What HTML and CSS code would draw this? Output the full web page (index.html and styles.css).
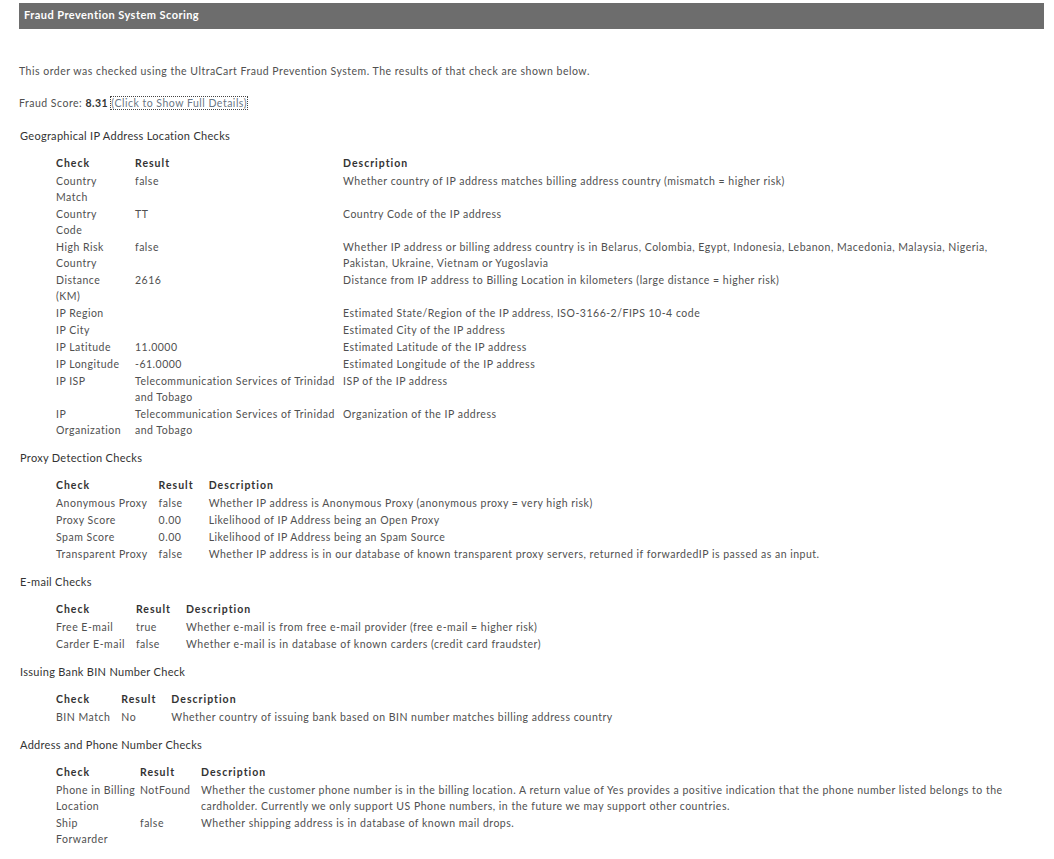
FILE: index.html
```html
<!DOCTYPE html>
<html>
<head>
<meta charset="utf-8">
<link rel="stylesheet" href="styles.css">
</head>
<body>
<div class="page">
  <div class="titlebar">Fraud Prevention System Scoring</div>
  <p class="intro">This order was checked using the UltraCart Fraud Prevention System. The results of that check are shown below.</p>
  <p class="score">Fraud Score: <b>8.31</b> <a class="details" href="#">(Click to Show Full Details)</a></p>

  <h3 class="section">Geographical IP Address Location Checks</h3>
  <table class="checks fixed geo">
    <tr><th class="w-check">Check</th><th class="w-result">Result</th><th>Description</th></tr>
    <tr><td>Country Match</td><td>false</td><td>Whether country of IP address matches billing address country (mismatch = higher risk)</td></tr>
    <tr><td>Country Code</td><td>TT</td><td>Country Code of the IP address</td></tr>
    <tr><td>High Risk Country</td><td>false</td><td>Whether IP address or billing address country is in Belarus, Colombia, Egypt, Indonesia, Lebanon, Macedonia, Malaysia, Nigeria, Pakistan, Ukraine, Vietnam or Yugoslavia</td></tr>
    <tr><td>Distance (KM)</td><td>2616</td><td>Distance from IP address to Billing Location in kilometers (large distance = higher risk)</td></tr>
    <tr><td>IP Region</td><td></td><td>Estimated State/Region of the IP address, ISO-3166-2/FIPS 10-4 code</td></tr>
    <tr><td>IP City</td><td></td><td>Estimated City of the IP address</td></tr>
    <tr><td>IP Latitude</td><td>11.0000</td><td>Estimated Latitude of the IP address</td></tr>
    <tr><td>IP Longitude</td><td>-61.0000</td><td>Estimated Longitude of the IP address</td></tr>
    <tr><td>IP ISP</td><td>Telecommunication Services of Trinidad and Tobago</td><td>ISP of the IP address</td></tr>
    <tr><td>IP Organization</td><td>Telecommunication Services of Trinidad and Tobago</td><td>Organization of the IP address</td></tr>
  </table>

  <h3 class="section">Proxy Detection Checks</h3>
  <table class="checks">
    <tr><th>Check</th><th>Result</th><th>Description</th></tr>
    <tr><td>Anonymous Proxy</td><td>false</td><td>Whether IP address is Anonymous Proxy (anonymous proxy = very high risk)</td></tr>
    <tr><td>Proxy Score</td><td>0.00</td><td>Likelihood of IP Address being an Open Proxy</td></tr>
    <tr><td>Spam Score</td><td>0.00</td><td>Likelihood of IP Address being an Spam Source</td></tr>
    <tr><td>Transparent Proxy</td><td>false</td><td>Whether IP address is in our database of known transparent proxy servers, returned if forwardedIP is passed as an input.</td></tr>
  </table>

  <h3 class="section">E-mail Checks</h3>
  <table class="checks">
    <tr><th>Check</th><th>Result</th><th>Description</th></tr>
    <tr><td>Free E-mail</td><td>true</td><td>Whether e-mail is from free e-mail provider (free e-mail = higher risk)</td></tr>
    <tr><td>Carder E-mail</td><td>false</td><td>Whether e-mail is in database of known carders (credit card fraudster)</td></tr>
  </table>

  <h3 class="section">Issuing Bank BIN Number Check</h3>
  <table class="checks">
    <tr><th>Check</th><th>Result</th><th>Description</th></tr>
    <tr><td>BIN Match</td><td>No</td><td>Whether country of issuing bank based on BIN number matches billing address country</td></tr>
  </table>

  <h3 class="section">Address and Phone Number Checks</h3>
  <table class="checks fixed addr">
    <tr><th class="w-check">Check</th><th class="w-result">Result</th><th>Description</th></tr>
    <tr><td>Phone in Billing Location</td><td>NotFound</td><td>Whether the customer phone number is in the billing location. A return value of Yes provides a positive indication that the phone number listed belongs to the cardholder. Currently we only support US Phone numbers, in the future we may support other countries.</td></tr>
    <tr><td><span class="narrow">Ship Forwarder</span></td><td>false</td><td>Whether shipping address is in database of known mail drops.</td></tr>
  </table>
</div>
</body>
</html>
```

FILE: styles.css
```css
html, body {
  margin: 0;
  padding: 0;
  background: #ffffff;
}

body {
  font-family: Lato, "Open Sans", "Liberation Sans", sans-serif;
  font-size: 10.5px;
  line-height: 16px;
  color: #505050;
  letter-spacing: 0.5px;
}

.page {
  padding: 3px 10px 0 19px;
}

.titlebar {
  background: #6d6d6d;
  color: #ffffff;
  font-weight: bold;
  font-size: 11px;
  letter-spacing: 0.45px;
  height: 26px;
  line-height: 24px;
  padding-left: 5px;
}

.intro {
  margin: 34px 0 0 0;
}

.score {
  margin: 16px 0 0 0;
}

.score b {
  color: #333333;
}

.details {
  color: #6b7785;
  text-decoration: none;
  outline: 1px dotted #444444;
  outline-offset: 0;
}

.section {
  margin: 17px 0 0 1px;
  font-size: 11px;
  font-weight: normal;
  color: #333333;
  letter-spacing: 0.3px;
  line-height: 16px;
}

.checks {
  margin: 10px 0 0 37px;
  border-collapse: separate;
  border-spacing: 0 1px;
}

.checks + .section {
  margin-top: 11px;
}

.checks th {
  text-align: left;
  font-weight: bold;
  color: #333333;
  letter-spacing: 1px;
  padding: 0 15px 1px 0;
  vertical-align: top;
}

.checks td {
  padding: 0 11px 0 0;
  vertical-align: top;
}

.checks.fixed {
  table-layout: fixed;
  width: calc(100% - 37px);
}

.geo .w-check {
  width: 64px;
}

.geo .w-result {
  width: 193px;
}

.geo td:nth-child(2) {
  padding-right: 6px;
}

.addr .w-check {
  width: 69px;
}

.addr .w-result {
  width: 46px;
}

.addr td:first-child {
  padding-right: 4px;
}

.narrow {
  display: block;
  max-width: 60px;
}
```
